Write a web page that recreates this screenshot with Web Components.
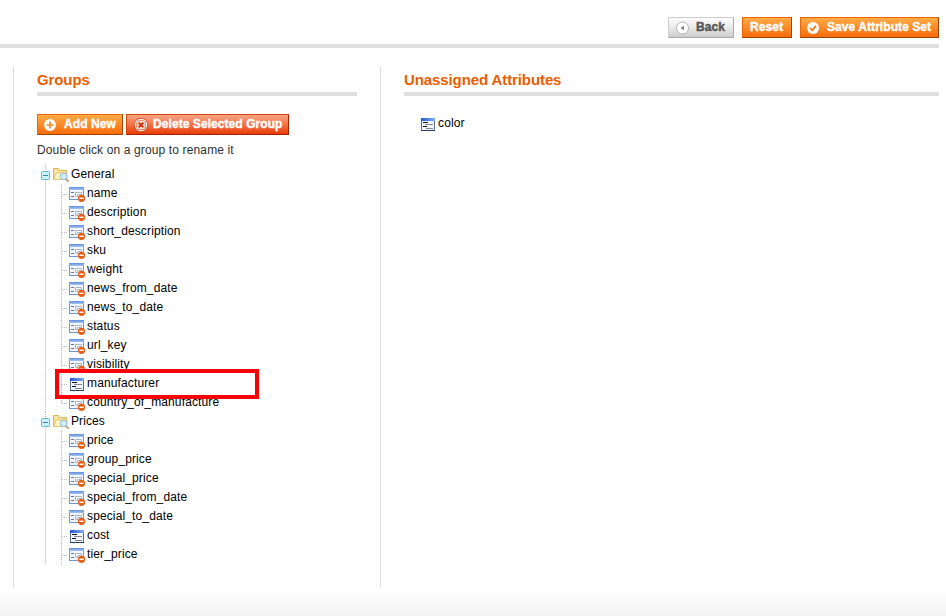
<!DOCTYPE html>
<html lang="en"><head><meta charset="utf-8"><title>Attribute Set</title>
<style>body{margin:0;background:#fff;font-family:"Liberation Sans",Arial,sans-serif;font-size:12px}</style></head>
<body><attribute-set-page></attribute-set-page>
<script>
const define = (name, html, setup) => customElements.define(name, class extends HTMLElement {
  connectedCallback() {
    if (this.shadowRoot) return;
    const t = document.createElement('template');
    t.innerHTML = html;
    this.attachShadow({mode: 'open'}).append(t.content.cloneNode(true));
    if (setup) setup(this, this.shadowRoot);
  }
});

const icons = {
  back: `<circle cx="6.5" cy="7" r="6" fill="#fff" stroke="#b5b5b5"/><path d="M8 4.5v5L4.5 7z" fill="#888"/>`,
  save: `<circle cx="7" cy="7" r="6" fill="#fff"/><path d="M4 7l2.2 2.3L10 4.8" fill="none" stroke="#f07a1c" stroke-width="1.8"/>`,
  add: `<circle cx="7" cy="7" r="5.9" fill="#fff"/><path d="M7 3.5v7M3.5 7h7" stroke="#f18a29" stroke-width="1.7"/>`,
  delete: `<circle cx="7" cy="7" r="7" fill="#cf4a20"/><circle cx="7" cy="7" r="6.2" fill="#fff"/><circle cx="7" cy="7" r="5.2" fill="#d9512c"/><circle cx="7" cy="7" r="4.6" fill="#f8ddd2"/><path d="M4.7 4.7l4.6 4.6M9.3 4.7l-4.6 4.6" stroke="#c93610" stroke-width="2"/>`
};
define('action-button', `<style>
  :host{display:flex;align-items:center;box-sizing:border-box;height:21px;padding:0 7px;border:1px solid;border-color:#ed6502 #a04300 #a04300 #ed6502;
   background:linear-gradient(#ffac47,#fb8b28 50%,#f76b0a);color:#fff;font-weight:bold;-webkit-text-stroke:.4px currentColor;white-space:nowrap;letter-spacing:.07px}
  :host([kind=back]){background:linear-gradient(#fdfdfd,#e6e6e6 55%,#cdcdcd);border-color:#ccc #aaa #aaa #ccc;color:#555}
  :host([kind=delete]){background:linear-gradient(#fba586,#f27850 45%,#e63d08);border-color:#d24403 #a92000 #a92000 #d24403}
  svg{width:14px;height:14px;overflow:visible;flex:none;margin:0 6px 0 -2px}
  :host([kind=add]) svg{margin-right:7px}
  :host([kind=save]) svg{margin-right:7px}
  :host([kind=back]) svg{margin:0 6px 0 0}
  :host([kind=delete]) svg{margin:0 5px 0 0}
  span{line-height:15px;margin-top:-1px}
</style><svg viewBox="0 0 14 14"></svg><span><slot></slot></span>`, (host, root) => {
  const svg = root.querySelector('svg'), icon = icons[host.getAttribute('kind')];
  if (icon) svg.innerHTML = icon; else svg.remove();
});

define('section-title', `<style>
  :host{display:block;box-sizing:border-box;height:30px;border-bottom:4px solid #dfdfdf;color:#eb5e00;font-weight:bold;font-size:15px;line-height:28px;letter-spacing:-.1px}
</style><slot></slot>`);

define('attribute-icon', `<style>
  :host{display:block;width:16px;height:16px}
  svg{display:block;overflow:visible}
  :host([locked]) .open,:host(:not([locked])) .locked{display:none}
</style>
<svg class="locked" width="16" height="16"><defs><linearGradient id="a" x2="0" y2="1"><stop stop-color="#5c8ee0"/><stop offset="1" stop-color="#a9c5f0"/></linearGradient></defs>
  <rect x=".5" y=".5" width="14" height="12" fill="#f1f6fd" stroke="#6f98d6"/><path d="M0 0h15v3H0z" fill="url(#a)"/>
  <path d="M2 5.5h3M2 9.5h3" stroke="#5878b8"/><path d="M6.5 9.5v-4h6v2h-4v2z" fill="#fff" stroke="#aab5c5"/>
  <circle cx="12.5" cy="11.3" r="3.6" fill="#e65e16"/><path d="M10.3 11.3h4.4" stroke="#fff" stroke-width="1.4"/></svg>
<svg class="open" width="16" height="16"><defs><linearGradient id="b"><stop stop-color="#2458d0"/><stop offset="1" stop-color="#81aef2"/></linearGradient></defs>
  <path d="M1.5 2v11.5h13V2" fill="#f1f4fa" stroke="#5c6f91"/><path d="M1 1h14v3H1z" fill="url(#b)"/><path d="M1 13.5h14" stroke="#2c3e62"/>
  <path d="M3 5.5h5M3 9.5h4" stroke="#111"/><path d="M5 7.5h8M6 11.5h7" stroke="#888"/></svg>`);

define('tree-leaf', `<style>
  :host{display:flex;height:19px;line-height:19px;color:#000;letter-spacing:.13px}
  i{width:6px;height:1px;margin:10px 1px 0 1px;background:repeating-linear-gradient(90deg,#bbb 0 1px,transparent 1px 2px)}
  attribute-icon{margin:3px 2px 0 0}
</style><i></i><attribute-icon></attribute-icon><span><slot></slot></span>`, (host, root) => {
  root.querySelector('attribute-icon').toggleAttribute('locked', !host.hasAttribute('free'));
});

define('tree-group', `<style>
  :host{display:block;--dots:repeating-linear-gradient(#bbb 0 1px,transparent 1px 2px);background:var(--dots) 8px 0/1px 100% no-repeat}
  header{display:flex;height:19px;line-height:19px;padding-left:4px;letter-spacing:.1px;color:#000}
  svg{display:block;overflow:visible}
  .toggle{width:9px;height:9px;margin:6px 3px 0 0}
  .folder{width:16px;height:16px;margin:2px 2px 0 0}
  section{margin-left:24px;background:var(--dots) 0 0/1px 100% no-repeat}
  :host(:first-child) section{background-size:1px calc(100% - 9px)}
</style><header><svg class="toggle"><rect x=".5" y=".5" width="8" height="8" rx="1" fill="#c8f3f8" stroke="#64b8c8"/><path d="M2 4.5h5" stroke="#3685a0"/></svg>
<svg class="folder"><path d="M.5 12.5v-11h5l1 2h7v9z" fill="#f9e29b" stroke="#dcb65c"/><path d="M1 12.5l2-6.5h11l-1 6.5z" fill="#fff3c2" stroke="#e0bd66" stroke-width=".7"/>
<path d="M13 12l2.6 2.6" stroke="#c89b64" stroke-width="1.8"/><circle cx="10.7" cy="9.3" r="3.4" fill="#d4eafa" stroke="#8db9dc"/></svg><span></span></header><section><slot></slot></section>`,
 (host, root) => root.querySelector('span').textContent = host.getAttribute('label'));

define('attribute-set-page', `<style>
  :host{display:flex;flex-direction:column;position:relative;width:946px;height:616px;overflow:hidden;background:linear-gradient(#fff,#f4f4f4) 0 588px/100% 28px no-repeat}
  .bar{display:flex;justify-content:flex-end;gap:8px;box-sizing:border-box;width:939px;height:48px;padding-top:17px;border-bottom:4px solid #dfdfdf}
  main{display:flex;margin:18px 7px 0 13px;height:522px}
  .groups{box-sizing:border-box;width:367px;border-left:1px solid #dfdfdf;padding:0 23px}
  .free{box-sizing:border-box;flex:1;border-left:1px solid #dfdfdf;padding-left:23px}
  .tools{display:flex;gap:3px;margin-top:18px}
  p{margin:5px 0 0;line-height:20px;color:#2f2f2f;letter-spacing:.13px}
  .tree{margin-top:5px}
  .row{display:flex;margin:18px 0 0 16px;line-height:19px;color:#000;letter-spacing:.15px}
  .row attribute-icon{margin:3px 2px 0 0}
  .mark{position:absolute;left:55px;top:369px;width:204px;height:30px;box-sizing:border-box;border:4px solid #fb0007}
  .save{width:139px}.reset{width:50px}.back{width:66px}.add{width:86px}.delete{width:163px}
</style>
<div class="bar"><action-button class="back" kind="back">Back</action-button><action-button class="reset">Reset</action-button><action-button class="save" kind="save">Save Attribute Set</action-button></div>
<main><div class="groups"><section-title>Groups</section-title>
<div class="tools"><action-button class="add" kind="add">Add New</action-button><action-button class="delete" kind="delete">Delete Selected Group</action-button></div>
<p>Double click on a group to rename it</p>
<div class="tree">
<tree-group label="General"><tree-leaf>name</tree-leaf><tree-leaf>description</tree-leaf><tree-leaf>short_description</tree-leaf><tree-leaf>sku</tree-leaf><tree-leaf>weight</tree-leaf><tree-leaf>news_from_date</tree-leaf><tree-leaf>news_to_date</tree-leaf><tree-leaf>status</tree-leaf><tree-leaf>url_key</tree-leaf><tree-leaf>visibility</tree-leaf><tree-leaf free>manufacturer</tree-leaf><tree-leaf>country_of_manufacture</tree-leaf></tree-group>
<tree-group label="Prices"><tree-leaf>price</tree-leaf><tree-leaf>group_price</tree-leaf><tree-leaf>special_price</tree-leaf><tree-leaf>special_from_date</tree-leaf><tree-leaf>special_to_date</tree-leaf><tree-leaf free>cost</tree-leaf><tree-leaf>tier_price</tree-leaf></tree-group>
</div></div>
<div class="free"><section-title>Unassigned Attributes</section-title><div class="row"><attribute-icon></attribute-icon><span>color</span></div></div></main>
<div class="mark"></div>`);
</script></body></html>
